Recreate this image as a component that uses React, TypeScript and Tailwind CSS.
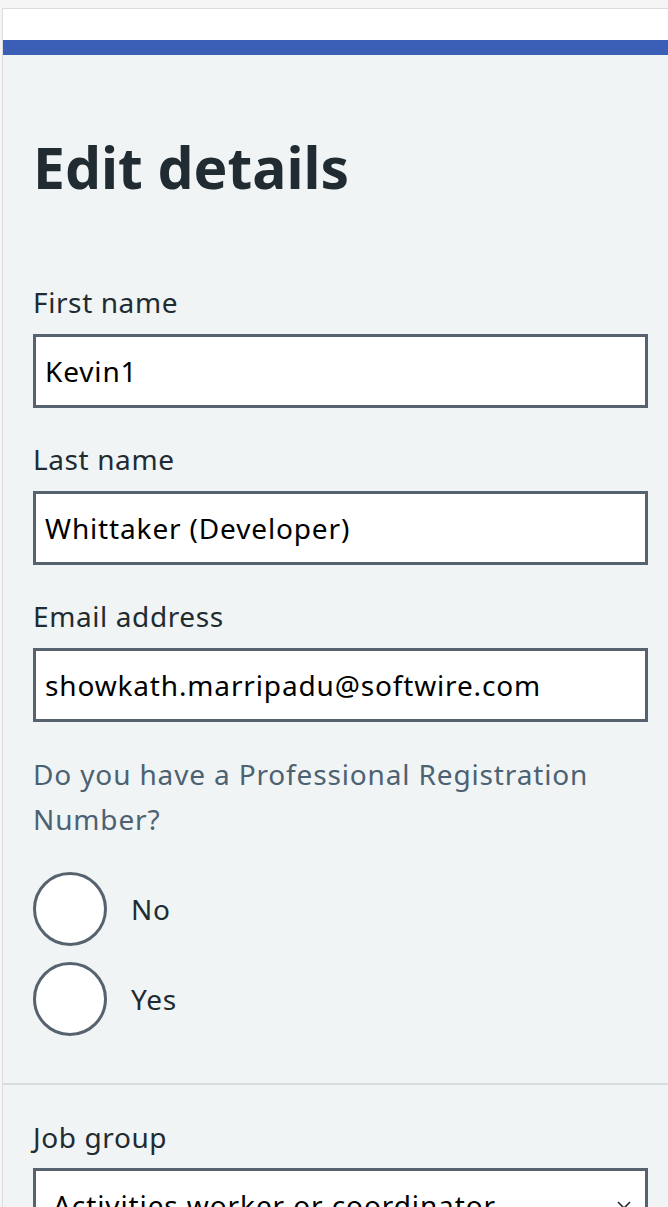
import React from 'react';

const font = { fontFamily: '"Noto Sans", "Open Sans", Arial, sans-serif' };

function TextField({ label, value }: { label: string; value: string }) {
  return (
    <div className="mb-[30px]">
      <label className="block text-[28px] leading-[42px] tracking-[0.6px] text-[#212b32] mb-[11px]">{label}</label>
      <input
        readOnly
        value={value}
        className="block w-[615px] h-[74px] border-[3px] border-[#56636f] bg-white px-[9px] text-[28px] tracking-[0.85px] text-black outline-none"
        style={font}
      />
    </div>
  );
}

function Radio({ label }: { label: string }) {
  return (
    <label className="flex items-center gap-[24px]">
      <span className="block w-[74px] h-[74px] rounded-full border-[3px] border-[#56636f] bg-white" />
      <span className="text-[28px] leading-[42px] tracking-[0.7px] text-[#212b32]">{label}</span>
    </label>
  );
}

export default function App() {
  return (
    <div className="min-h-[1207px] bg-[#f5f5f5] pt-[8px] pl-[2px]" style={font}>
      <div className="min-h-[1199px] border-l border-t border-[#dcdcdc] bg-[#f0f4f5]">
        {/* header strip */}
        <div className="h-[31px] bg-white" />
        <div className="h-[15px] bg-[#3b5fb6]" />

        <div className="pl-[30px] pt-[79px]">
          <h1 className="text-[57px] leading-[67px] font-bold text-[#212b32] mb-[80px]">Edit details</h1>

          <TextField label="First name" value="Kevin1" />
          <TextField label="Last name" value="Whittaker (Developer)" />
          <TextField label="Email address" value="showkath.marripadu@softwire.com" />

          <fieldset>
            <legend className="w-[600px] text-[28px] leading-[45px] tracking-[0.85px] text-[#4c6272] mb-[30px]">
              Do you have a Professional Registration Number?
            </legend>
            <div className="flex flex-col gap-[16px]">
              <Radio label="No" />
              <Radio label="Yes" />
            </div>
          </fieldset>
        </div>

        <div className="mt-[47px] border-t-2 border-[#d8dde0]" />

        <div className="pl-[30px] pt-[31px]">
          <label className="block text-[28px] leading-[42px] tracking-[0.6px] text-[#212b32] mb-[10px]">Job group</label>
          <div className="relative w-[615px] h-[74px] border-[3px] border-[#56636f] bg-white flex items-center pl-[17px]">
            <span className="text-[28px] tracking-[0.9px] text-black">Activities worker or coordinator</span>
            <svg className="absolute right-[14px] top-[30px]" width="14" height="10" viewBox="0 0 14 10">
              <path d="M1 1l6 6 6-6" fill="none" stroke="#212b32" strokeWidth="1.6" />
            </svg>
          </div>
        </div>
      </div>
    </div>
  );
}
